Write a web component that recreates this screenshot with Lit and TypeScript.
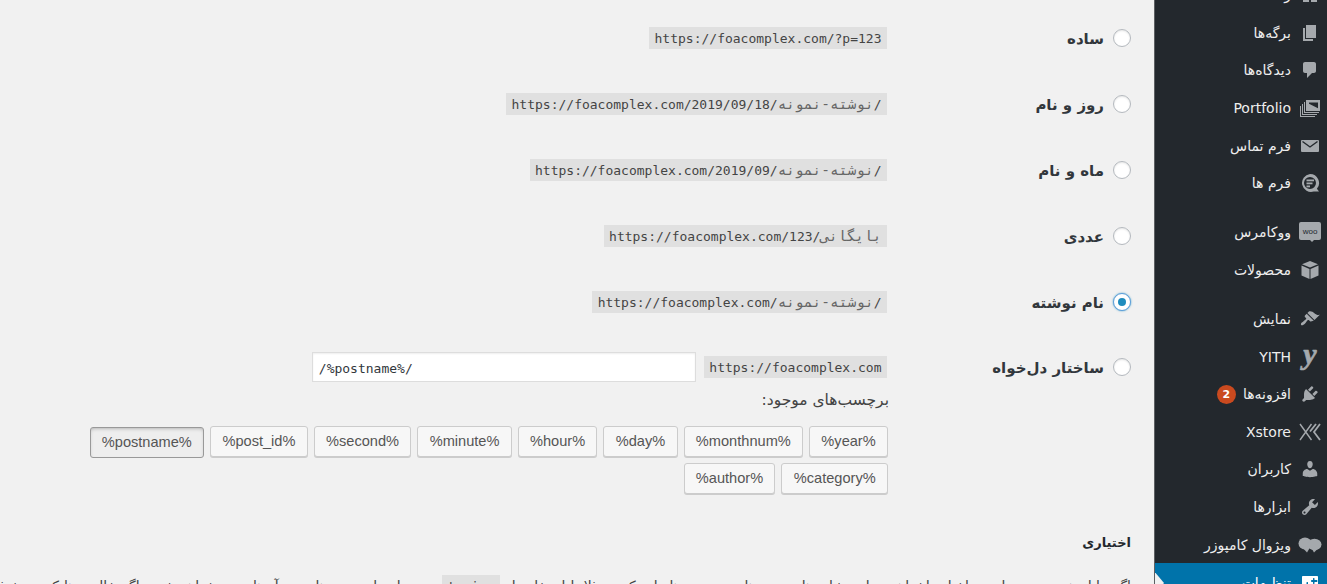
import { LitElement, html, css, svg } from "lit";
import { customElement } from "lit/decorators.js";

const ic = (body: unknown, fill = "#a5a9ad") =>
  html`<svg class="ic" viewBox="0 0 20 20" width="20" height="20" fill=${fill}>${body}</svg>`;
const P = (d: string) => svg`<path d=${d}></path>`;

const icons: Record<string, unknown> = {
  tile: ic(svg`<rect x="3" y="3" width="6" height="6"/><rect x="11" y="3" width="6" height="6"/><rect x="3" y="11" width="6" height="6"/><rect x="11" y="11" width="6" height="6"/>`),
  page: ic(P("M6 15V2h10v13H6zm-1 1h8v2H3V5h2v11z")),
  comment: ic(P("M5 2h9c1.1 0 2 .9 2 2v7c0 1.1-.9 2-2 2h-2l-5 5v-5H5c-1.1 0-2-.9-2-2V4c0-1.1.9-2 2-2z")),
  portfolio: ic(svg`<path fill-rule="evenodd" d="M6 2h14v11H6zM9 4.500v1.200l9 4.600V4.500z"/><path d="M4 4h1v10h14v1H4zM2 6h1v10h14v1H2zM0 8h1v10h14v1H0z"/>`),
  mail: ic(svg`<rect x="1" y="4" width="18" height="12" rx="1"/><path d="M2.500 5.500l7.500 5.500 7.500-5.500" fill="none" stroke="#23282d" stroke-width="1.400"/>`),
  forms: ic(svg`<path fill-rule="evenodd" d="M10 1a9 9 0 0 1 6.900 14.800L19 18.500h-5.200A9 9 0 1 1 10 1zm0 3a6 6 0 1 0 0 12 6 6 0 0 0 0-12z"/><rect x="6.500" y="6.500" width="7.500" height="1.800"/><rect x="6.500" y="9.500" width="6" height="1.800"/><rect x="6.500" y="12.500" width="3.500" height="1.800"/>`),
  woo: html`<span class="woo"><span class="woot">woo</span></span>`,
  product: ic(svg`<path d="M10 1l8 3.200L10 7.600 2 4.200z"/><path d="M1.500 5.600l8 3.400V19l-8-3.600z"/><path d="M18.500 5.600l-8 3.400V19l8-3.600z"/>`),
  brush: ic(P("M14.48 11.06L7.41 3.99l1.5-1.5c.5-.56 2.3-.47 3.51.32 1.21.8 1.43 1.28 2.91 2.1 1.18.64 2.45 1.26 4.45.85zm-.71.71L6.7 4.7 4.93 6.47c-.39.39-.39 1.02 0 1.41l1.06 1.06c.39.39.39 1.03 0 1.42-.6.6-1.43 1.11-2.21 1.69-.35.26-.7.53-1.01.84C1.43 13.23.4 14.96 1.12 15.95c.7.98 2.6-.13 3.95-1.48.31-.31.58-.66.84-1.01.58-.78 1.08-1.61 1.69-2.21.39-.39 1.02-.39 1.42 0l1.06 1.06c.39.39 1.02.39 1.41 0z")),
  yith: html`<span class="yith">y</span>`,
  plugin: ic(P("M13.11 4.36L9.87 7.6 8 5.73l3.24-3.24c.35-.34 1.05-.2 1.56.32.52.51.66 1.21.31 1.55zm-8 1.77l.91-1.12 9.01 9.01-1.19.84c-.71.71-2.63 1.16-3.82 1.16H6.14L4.9 17.26c-.59.59-1.54.59-2.12 0-.59-.58-.59-1.53 0-2.12l1.24-1.24v-3.88c0-1.13.4-3.19 1.09-3.89zm7.26 3.97l3.24-3.24c.34-.35 1.04-.21 1.55.31.52.51.66 1.21.31 1.55l-3.24 3.25z")),
  xstore: html`<svg class="ic" viewBox="0 0 22 20" width="22" height="20" fill="none" stroke="#a5a9ad"><path stroke-width="1.400" d="M1 2l11.500 16M12.500 2L1 18"/><path stroke-width="1.800" d="M21 2L15 10l6 8M17 2L11 9.500"/></svg>`,
  user: ic(P("M10 9.25c-2.27 0-2.73-3.44-2.73-3.44C7 4.02 7.82 2 9.97 2c2.16 0 2.98 2.02 2.71 3.81 0 0-.41 3.44-2.68 3.44zm0 2.57L12.72 10c2.39 0 4.52 2.33 4.52 4.53v2.49s-3.65 1.13-7.24 1.13c-3.65 0-7.24-1.13-7.24-1.13v-2.49c0-2.25 1.94-4.48 4.47-4.48z")),
  tools: ic(P("M16.68 9.77c-1.34 1.34-3.3 1.67-4.95.99l-5.41 6.52c-.99.99-2.59.99-3.58 0s-.99-2.59 0-3.57l6.52-5.42c-.68-1.65-.35-3.61.99-4.95 1.28-1.28 3.12-1.62 4.72-1.06l-2.89 2.89 2.82 2.82 2.86-2.87c.53 1.58.18 3.39-1.08 4.65zM3.81 16.21c.4.39 1.04.39 1.43 0 .4-.4.4-1.04 0-1.43-.39-.4-1.03-.4-1.43 0-.39.39-.39 1.03 0 1.43z")),
  vc: html`<svg class="ic" viewBox="0 0 24 20" width="24" height="20" fill="#a5a9ad"><ellipse cx="7" cy="8.500" rx="6.500" ry="6"/><path d="M3 11l6 6.500 3-5z"/><ellipse cx="16.500" cy="9.500" rx="7" ry="5.800"/><path d="M14 14l2 3.500 4-4z"/></svg>`,
  settings: ic(P("M18 16V4c0-.55-.45-1-1-1H3c-.55 0-1 .45-1 1v12c0 .55.45 1 1 1h14c.55 0 1-.45 1-1zM8 11h1c.55 0 1 .45 1 1s-.45 1-1 1H8v1.5c0 .28-.22.5-.5.5H7c-.28 0-.5-.22-.5-.5V13h-2c-.55 0-1-.45-1-1s.45-1 1-1h2V9.5c0-.28.22-.5.5-.5h.5c.28 0 .5.22.5.5V11zm5-2h-1c-.55 0-1-.45-1-1s.45-1 1-1h1V5.5c0-.28.22-.5.5-.5h.5c.28 0 .5.22.5.5V7h2c.55 0 1 .45 1 1s-.45 1-1 1h-2v1.5c0 .28-.22.5-.5.5h-.5c-.28 0-.5-.22-.5-.5V9z"), "#fff"),
};

const menu: { t: string; i: string; sep?: boolean; badge?: string; cur?: boolean }[] = [
  { t: "رسانه", i: "tile" },
  { t: "برگه‌ها", i: "page" },
  { t: "دیدگاه‌ها", i: "comment" },
  { t: "Portfolio", i: "portfolio" },
  { t: "فرم تماس", i: "mail" },
  { t: "فرم ها", i: "forms" },
  { t: "ووکامرس", i: "woo", sep: true },
  { t: "محصولات", i: "product" },
  { t: "نمایش", i: "brush", sep: true },
  { t: "YITH", i: "yith" },
  { t: "افزونه‌ها", i: "plugin", badge: "2" },
  { t: "Xstore", i: "xstore" },
  { t: "کاربران", i: "user" },
  { t: "ابزارها", i: "tools" },
  { t: "ویژوال کامپوزر", i: "vc" },
  { t: "تنظیمات", i: "settings", cur: true },
];

const rows: { l: string; pre: string; ar: string; post: string; on?: boolean }[] = [
  { l: "ساده", pre: "https://foacomplex.com/?p=123", ar: "", post: "" },
  { l: "روز و نام", pre: "https://foacomplex.com/2019/09/18/", ar: "نوشته-نمونه", post: "/" },
  { l: "ماه و نام", pre: "https://foacomplex.com/2019/09/", ar: "نوشته-نمونه", post: "/" },
  { l: "عددی", pre: "https://foacomplex.com/", ar: "بایگانی", post: "/123" },
  { l: "نام نوشته", pre: "https://foacomplex.com/", ar: "نوشته-نمونه", post: "/", on: true },
];

const tags = ["%year%", "%monthnum%", "%day%", "%hour%", "%minute%", "%second%", "%post_id%", "%postname%", "%category%", "%author%"];

@customElement("app-root")
export class AppRoot extends LitElement {
  static styles = css`
    :host {
      display: flex;
      direction: rtl;
      width: 1327px;
      height: 584px;
      overflow: hidden;
      background: #f1f1f1;
      font-family: "DejaVu Sans", sans-serif;
      color: #444;
    }
    .side {
      flex: 0 0 173px;
      box-sizing: border-box;
      height: 584px;
      overflow: hidden;
      background: #23282d;
      border-left: 1px solid #5d6063;
    }
    .menu { margin-top: -23.5px; display: flex; flex-direction: column; }
    .item {
      position: relative;
      flex: 0 0 37.6px;
      display: flex;
      align-items: center;
      gap: 6px;
      padding-right: 4px;
      color: #eee;
      font-size: 14px;
    }
    .item.sep { margin-top: 11.5px; }
    .item.cur { background: #0073aa; color: #fff; flex-basis: 40px; }
    .item.cur::after {
      content: "";
      position: absolute;
      left: -1px;
      top: 50%;
      margin-top: -12px;
      border: 12px solid transparent;
      border-left: 10px solid #f1f1f1;
    }
    .iw { flex: 0 0 26px; display: flex; justify-content: center; align-items: center; height: 20px; }
    .ic { display: block; flex: none; }
    .woo { width: 22px; height: 18px; border-radius: 2px; background: #a5a9ad; display: flex; align-items: center; justify-content: center; position: relative; margin-top: -2px; }
    .woo::after { content: ""; position: absolute; bottom: -5px; left: 10px; border: 3px solid transparent; border-top: 3px solid #a5a9ad; }
    .woot { color: #23282d; font: 8px "Liberation Sans", sans-serif; direction: ltr; }
    .yith { font: italic 700 30px/20px "Liberation Serif", serif; color: #a5a9ad; margin-top: -6px; -webkit-text-stroke: 0.7px #a5a9ad; }
    .badge {
      width: 19px; height: 19px; border-radius: 50%;
      background: #ca4a1f; color: #fff;
      font: 700 11px/19px "DejaVu Sans", sans-serif;
      text-align: center;
      margin-right: 1px;
    }
    .main { flex: 1; min-width: 0; padding: 5px 23px 0 0; box-sizing: border-box; height: 584px; overflow: hidden; }
    .row { display: flex; height: 66px; align-items: center; }
    .lab { flex: 0 0 244px; display: flex; align-items: center; gap: 9px; font-size: 15px; font-weight: 700; color: #32373c; }
    .lab .txt { padding-top: 2px; }
    .radio {
      width: 18px; height: 18px; flex: none; box-sizing: border-box;
      border-radius: 50%;
      background: #fff;
      border: 1px solid #b4b9be;
      box-shadow: inset 0 1px 2px rgba(0,0,0,.1);
      display: flex; align-items: center; justify-content: center;
    }
    .radio.on { border-color: #5b9dd9; box-shadow: 0 0 2px rgba(30,140,190,.8); }
    .radio.on::before { content: ""; width: 8px; height: 8px; border-radius: 50%; background: #1e8cbe; }
    code {
      display: inline-block;
      height: 22px;
      direction: ltr;
      unicode-bidi: embed;
      font: 13px/23px "DejaVu Sans Mono", monospace;
      padding: 0 5.5px;
      background: rgba(0,0,0,.07);
      color: #444;
      white-space: nowrap;
    }
    .ar { font-size: 14.5px; line-height: 20px; color: #666; }
    .val { display: flex; align-items: center; gap: 8px; }
    .inp {
      box-sizing: border-box;
      width: 384px; height: 30px;
      background: #fff;
      border: 1px solid #ddd;
      box-shadow: inset 0 1px 2px rgba(0,0,0,.07);
      direction: ltr;
      font: 13px/31px "DejaVu Sans Mono", monospace;
      color: #32373c;
      padding: 0 6px;
    }
    .custom { display: flex; height: 30px; margin-top: 17px; align-items: center; }
    .extra { margin-right: 243px; }
    .avail { margin: 8px -1px 0 0; height: 20px; font-size: 15.5px; line-height: 20px; color: #444; }
    .tags { display: flex; flex-wrap: wrap; gap: 6px; width: 802px; margin: 16px 0 0 0; }
    .tag {
      box-sizing: border-box;
      height: 31px;
      padding: 0 11.3px;
      background: #f7f7f7;
      border: 1px solid #ccc;
      border-radius: 3px;
      box-shadow: 0 1px 0 #ccc;
      font: 14.6px/28px "Liberation Sans", sans-serif;
      color: #555;
      direction: ltr;
    }
    .tag.on {
      background: #eee;
      border-color: #999;
      box-shadow: inset 0 2px 5px -3px rgba(0,0,0,.5);
      transform: translateY(1px);
    }
    h2 { margin: 39px 0 0; font-size: 13px; line-height: 20px; font-weight: 700; color: #23282d; }
    .desc { margin: 22px 0 0; font-size: 14px; line-height: 22px; white-space: nowrap; color: #444; word-spacing: 0.6px; }
  `;

  render() {
    return html`
      <nav class="side">
        <div class="menu">
          ${menu.map(
            (m) => html`<div class="item ${m.sep ? "sep" : ""} ${m.cur ? "cur" : ""}">
              <span class="iw">${icons[m.i]}</span>
              <span>${m.t}</span>
              ${m.badge ? html`<span class="badge">${m.badge}</span>` : ""}
            </div>`
          )}
        </div>
      </nav>
      <div class="main">
        ${rows.map(
          (r) => html`<div class="row">
            <div class="lab"><span class=${r.on ? "radio on" : "radio"}></span><span class="txt">${r.l}</span></div>
            <code>${r.pre}<span class="ar">${r.ar}</span>${r.post}</code>
          </div>`
        )}
        <div class="custom">
          <div class="lab"><span class="radio"></span><span class="txt">ساختار دل‌خواه</span></div>
          <div class="val">
            <code>https://foacomplex.com</code>
            <div class="inp">/%postname%/</div>
          </div>
        </div>
        <div class="extra">
          <div class="avail">برچسب‌های موجود:</div>
          <div class="tags">
            ${tags.map((t) => html`<span class=${t === "%postname%" ? "tag on" : "tag"}>${t}</span>`)}
          </div>
        </div>
        <h2>اختیاری</h2>
        <p class="desc">اگر مایل هستید می‌توانید ساختار دلخواهی برای نشانی‌های دسته‌ها و برچسب‌ها وارد کنید. مثلا با استفاده از <code>topics</code> به عنوان پایه دسته‌ها پیوند آن‌ها چنین خواهد شد و اگر خالی رها کنید پیش‌فرض</p>
      </div>
    `;
  }
}
